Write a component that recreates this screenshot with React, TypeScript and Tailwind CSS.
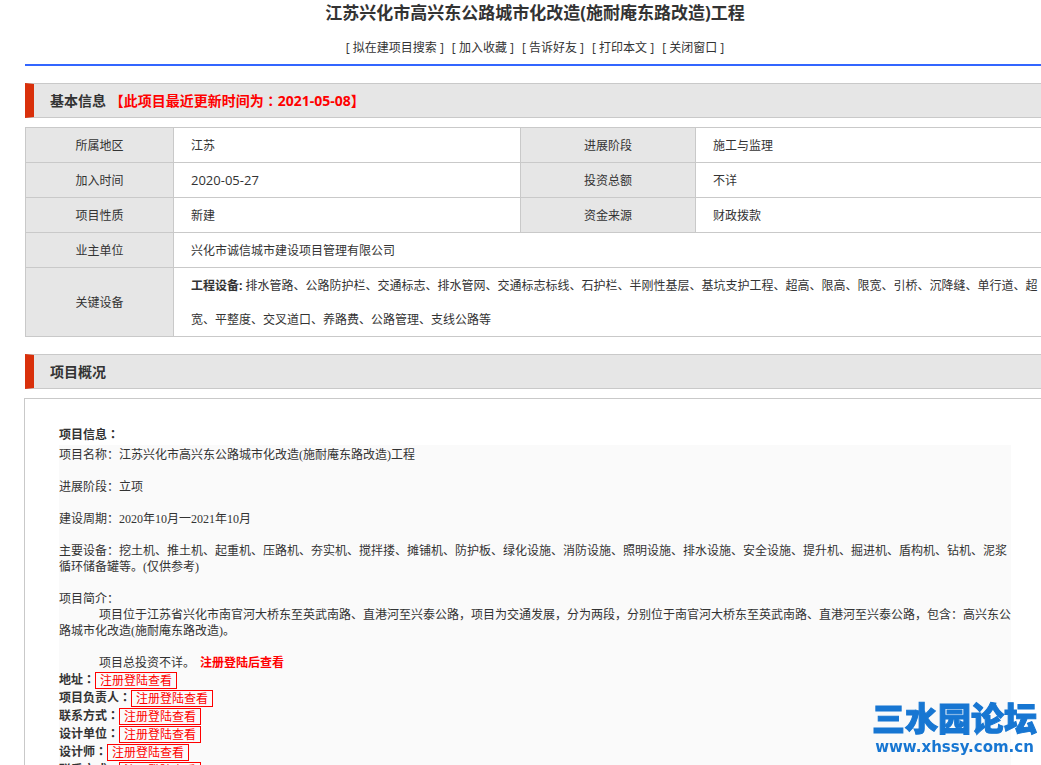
import type { ReactNode } from "react";

const actions = ["拟在建项目搜索", "加入收藏", "告诉好友", "打印本文", "关闭窗口"];

const rows = [
    ["所属地区", "江苏", "进展阶段", "施工与监理"],
    ["加入时间", "2020-05-27", "投资总额", "不详"],
    ["项目性质", "新建", "资金来源", "财政拨款"],
];

const contacts = ["地址", "项目负责人", "联系方式", "设计单位", "设计师", "联系方式"];

// the TC face centres its colon in the full-width cell
function Colon(){
    return <span className="font-['Noto_Sans_CJK_TC',sans-serif] leading-none">：</span>
}

function SectionTitle({ children }: { children: ReactNode }){
    return (
        <h2 className="border border-l-[9px] border-[#c9c9c9] border-l-[#d9300b] bg-[#e6e6e6] pl-4 text-sm leading-[33px] font-bold">
            {children}
        </h2>
    )
}

function Label({ children }: { children: ReactNode }){
    return (
        <th scope="row" className="border border-[#c9c9c9] bg-[#e6e6e6] pt-0.5 text-center font-normal">
            {children}
        </th>
    )
}

function Value({ children, span }: { children: ReactNode; span?: number }){
    return (
        <td colSpan={span} className="border border-[#c9c9c9] pt-0.5 pl-[17px]">
            {children}
        </td>
    )
}

function Watermark(){
    return (
        <div className="fixed right-1 bottom-[9px] text-center font-bold text-[#1776d2]">
            <div className="text-[33px] leading-[38px] font-black [-webkit-text-stroke:1px_#1776d2]">三水园论坛</div>
            <div className="font-['DejaVu_Sans',sans-serif] text-[15px] leading-[18px]">www.xhssy.com.cn</div>
        </div>
    )
}

export default function App(){
    return (
        <div className="overflow-x-clip bg-white pl-[25px] font-['Open_Sans','Noto_Sans_CJK_SC',sans-serif] text-xs text-[#333]">
            <div className="-mr-1">
                <h1 className="pt-px text-center text-[17px] leading-6 font-bold">江苏兴化市高兴东公路城市化改造(施耐庵东路改造)工程</h1>
                <nav className="mt-[13px] flex justify-center gap-2 border-b-2 border-[#3366ff] pb-[7px] leading-[19px]">
                    {actions.map((a) => (
                        <span key={a}>[ <a href="#">{a}</a> ]</span>
                    ))}
                </nav>

                <div className="mt-[17px]">
                    <SectionTitle>基本信息 <span className="text-[#ff0000]">【此项目最近更新时间为<Colon />2021-05-08】</span></SectionTitle>
                </div>

                <table className="mt-[9px] w-full table-fixed border-collapse leading-8">
                    <colgroup>
                        <col className="w-[148px]" />
                        <col className="w-[347px]" />
                        <col className="w-[175px]" />
                        <col />
                    </colgroup>
                    <tbody>
                        {rows.map((r) => (
                            <tr key={r[0]}>
                                <Label>{r[0]}</Label>
                                <Value>{/^\d/.test(r[1]) ? <span className="text-[13px] leading-none">{r[1]}</span> : r[1]}</Value>
                                <Label>{r[2]}</Label>
                                <Value>{r[3]}</Value>
                            </tr>
                        ))}
                        <tr>
                            <Label>业主单位</Label>
                            <Value span={3}>兴化市诚信城市建设项目管理有限公司</Value>
                        </tr>
                        <tr>
                            <Label>关键设备</Label>
                            <Value span={3}>
                                <div className="-mt-px -mb-px leading-[34px]">
                                    <b>工程设备:</b> 排水管路、公路防护栏、交通标志、排水管网、交通标志标线、石护栏、半刚性基层、基坑支护工程、超高、限高、限宽、引桥、沉降缝、单行道、超宽、平整度、交叉道口、养路费、公路管理、支线公路等
                                </div>
                            </Value>
                        </tr>
                    </tbody>
                </table>

                <div className="mt-[17px]">
                    <SectionTitle>项目概况</SectionTitle>
                </div>

                <section className="mt-[9px] -mr-px -ml-px border border-[#c9c9c9] px-[34px] pt-[26px] pb-8">
                    <h3 className="leading-5 font-bold">项目信息<Colon /></h3>
                    <div className="bg-[#fafafa] pt-0.5">
                        <div className="space-y-4 font-['Liberation_Serif','Noto_Sans_CJK_SC',sans-serif] leading-4">
                            <p>项目名称：江苏兴化市高兴东公路城市化改造(施耐庵东路改造)工程</p>
                            <p>进展阶段：立项</p>
                            <p>建设周期：2020年10月一2021年10月</p>
                            <p>主要设备：挖土机、推土机、起重机、压路机、夯实机、搅拌搂、摊铺机、防护板、绿化设施、消防设施、照明设施、排水设施、安全设施、提升机、掘进机、盾构机、钻机、泥浆循环储备罐等。(仅供参考)</p>
                            <div>
                                <p>项目简介：</p>
                                <p className="indent-10">项目位于江苏省兴化市南官河大桥东至英武南路、直港河至兴泰公路，项目为交通发展，分为两段，分别位于南官河大桥东至英武南路、直港河至兴泰公路，包含：高兴东公路城市化改造(施耐庵东路改造)。</p>
                            </div>
                            <p className="indent-10">项目总投资不详。 <b className="ml-0.5 text-[#ff0000]">注册登陆后查看</b></p>
                        </div>
                        <ul>
                            {contacts.map((c, i) => (
                                <li key={i} className="flex items-center leading-[18px]">
                                    <b>{c}<Colon /></b>
                                    <a href="#" className="border border-[#ff0000] px-1 leading-[15px] text-[#ff0000]">注册登陆查看</a>
                                </li>
                            ))}
                        </ul>
                    </div>
                </section>
            </div>
            <Watermark />
        </div>
    )
}
